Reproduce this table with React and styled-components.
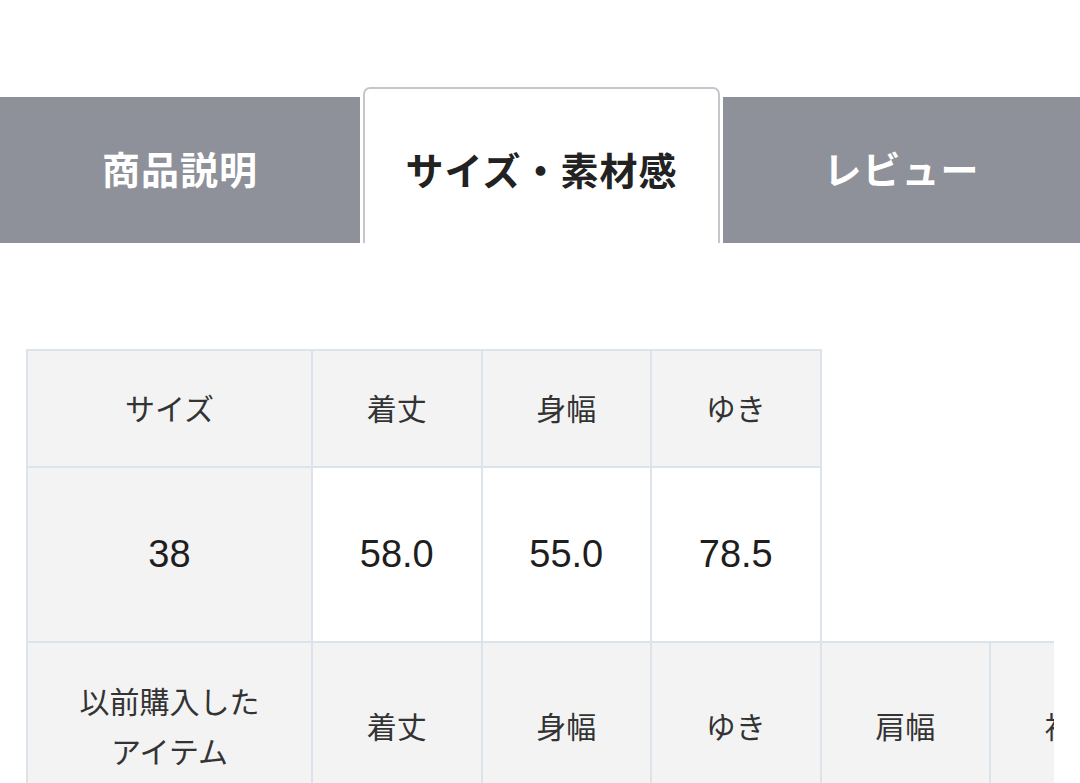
import styled, { createGlobalStyle } from "styled-components";

const GlobalStyle = createGlobalStyle`
  body {
    margin: 0;
    background: #ffffff;
    font-family: "Liberation Sans", "Noto Sans CJK JP", sans-serif;
  }
`;

const Page = styled.div`
  width: 1080px;
  height: 783px;
  overflow: hidden;
  padding-top: 87px;
  box-sizing: border-box;
`;

const TabBar = styled.div`
  display: grid;
  grid-template-columns: 360px 357px 1fr;
  column-gap: 3px;
  align-items: end;
`;

const Tab = styled.div`
  display: flex;
  align-items: center;
  justify-content: center;
  box-sizing: border-box;
  height: ${(p) => (p.$active ? "156px" : "146px")};
  padding-top: ${(p) => (p.$active ? "10px" : "0")};
  padding-bottom: 6px;
  background: ${(p) => (p.$active ? "#ffffff" : "#8e9199")};
  color: ${(p) => (p.$active ? "#222222" : "#ffffff")};
  border: ${(p) => (p.$active ? "2px solid #c3c6cb" : "none")};
  border-bottom: none;
  border-radius: ${(p) => (p.$active ? "7px 7px 0 0" : "0")};
  font-family: "Noto Sans CJK JP", sans-serif;
  font-weight: 700;
  font-size: 38px;
  letter-spacing: 1px;
`;

const Section = styled.div`
  padding: 106px 0 0 26px;
`;

const Scroller = styled.div`
  width: 1028px;
  overflow: hidden;
`;

const Table = styled.table`
  border-collapse: collapse;
  table-layout: fixed;
  margin-top: ${(p) => (p.$follow ? "-2px" : "0")};
`;

const Cell = styled.td`
  box-sizing: border-box;
  width: ${(p) => (p.$first ? "285px" : "169.5px")};
  min-width: ${(p) => (p.$first ? "285px" : "169.5px")};
  height: ${(p) => p.$h}px;
  border: 2px solid #dde3ea;
  background: ${(p) => (p.$head ? "#f3f3f3" : "#ffffff")};
  color: ${(p) => (p.$num ? "#1e1e1e" : "#333333")};
  font-family: ${(p) =>
    p.$num
      ? `"Liberation Sans", "Noto Sans CJK JP", sans-serif`
      : `"Noto Sans CJK JP", sans-serif`};
  font-size: ${(p) => (p.$num ? "38px" : "30px")};
  line-height: ${(p) => (p.$num ? "1.2" : "50px")};
  text-align: center;
  vertical-align: middle;
  padding: 0 0 ${(p) => (p.$num ? "0" : "4px")};
  white-space: nowrap;
`;

const sizeHead = ["着丈", "身幅", "ゆき"];
const sizeRow = ["58.0", "55.0", "78.5"];
const pastHead = ["着丈", "身幅", "ゆき", "肩幅", "袖丈"];

export default function App() {
  return (
    <>
      <GlobalStyle />
      <Page>
        <TabBar>
          <Tab>商品説明</Tab>
          <Tab $active>サイズ・素材感</Tab>
          <Tab>レビュー</Tab>
        </TabBar>
        <Section>
          <Scroller>
            <Table>
              <tbody>
                <tr>
                  <Cell $first $head $h={117}>サイズ</Cell>
                  {sizeHead.map((t) => (
                    <Cell key={t} $head $h={117}>{t}</Cell>
                  ))}
                </tr>
                <tr>
                  <Cell $first $head $num $h={175}>38</Cell>
                  {sizeRow.map((t) => (
                    <Cell key={t} $num $h={175}>{t}</Cell>
                  ))}
                </tr>
              </tbody>
            </Table>
            <Table $follow>
              <tbody>
                <tr>
                  <Cell $first $head $h={170}>
                    以前購入した
                    <br />
                    アイテム
                  </Cell>
                  {pastHead.map((t) => (
                    <Cell key={t} $head $h={170}>{t}</Cell>
                  ))}
                </tr>
              </tbody>
            </Table>
          </Scroller>
        </Section>
      </Page>
    </>
  );
}
